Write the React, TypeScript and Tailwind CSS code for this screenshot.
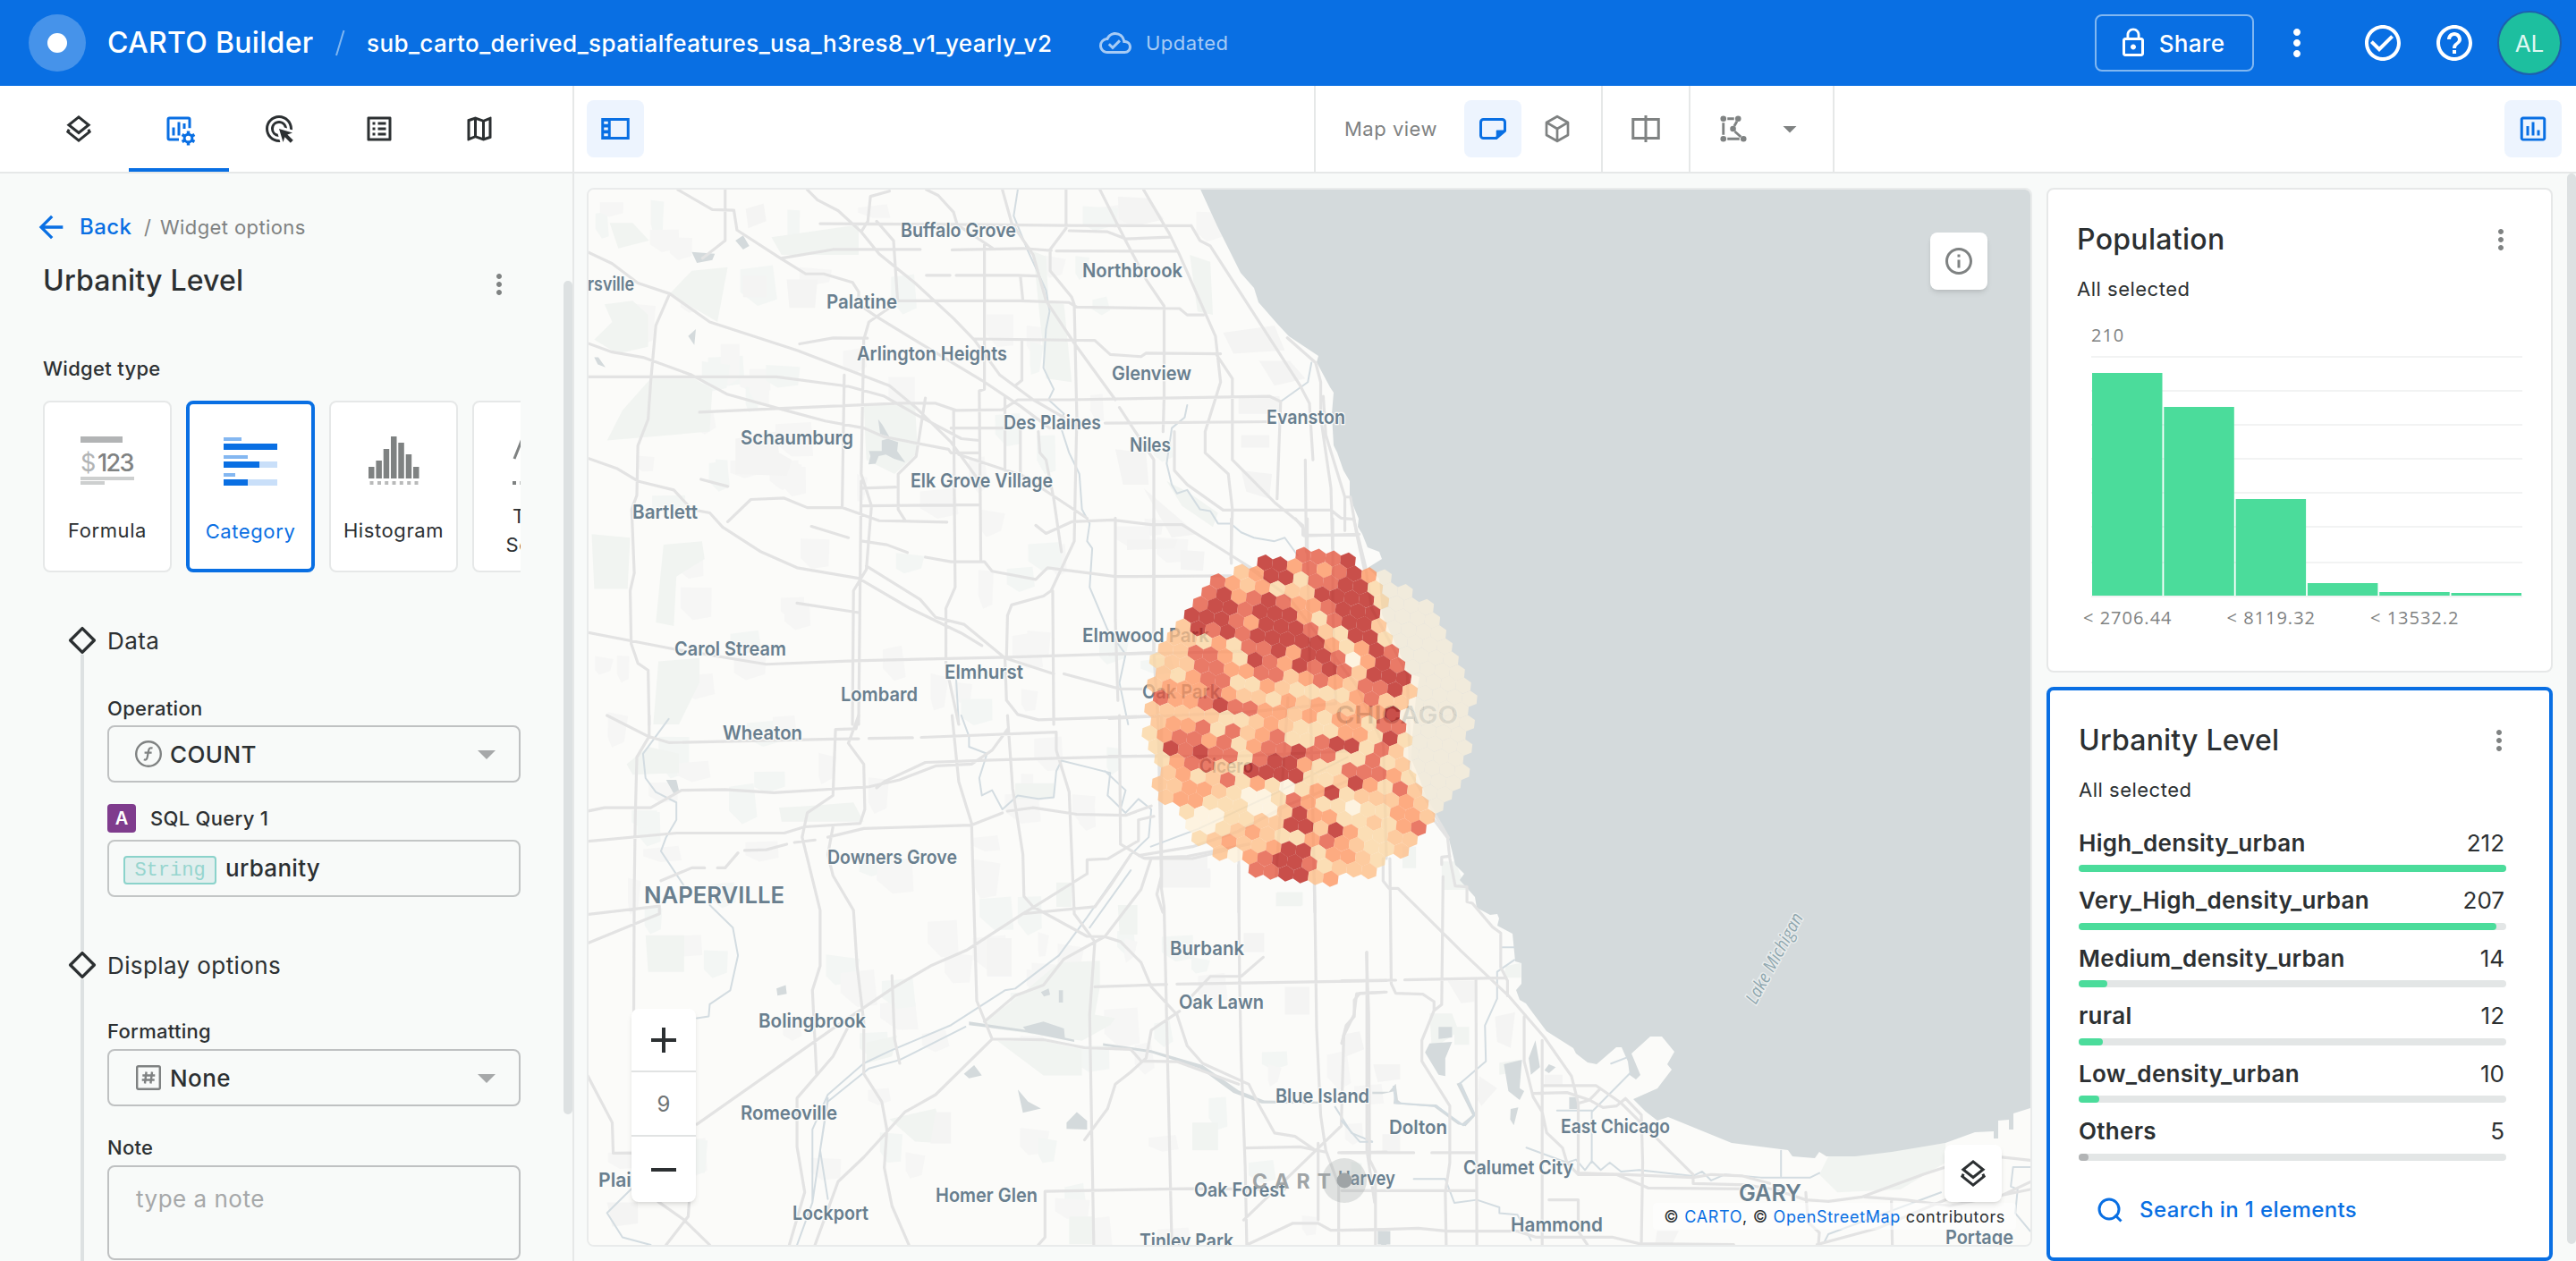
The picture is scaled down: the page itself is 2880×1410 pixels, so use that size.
import React from "react";
import {
  MdOutlineCloudDone,
  MdLockOutline,
  MdMoreVert,
  MdCheckCircleOutline,
  MdHelpOutline,
  MdAdsClick,
  MdListAlt,
  MdOutlineMap,
  MdInsertChartOutlined,
  MdInfoOutline,
  MdAdd,
  MdRemove,
  MdArrowDropDown,
  MdArrowBack,
} from "react-icons/md";

/* ---------- Icons ---------- */

const LayersIcon = ({ className = "" }: { className?: string }) => (
  <svg viewBox="0 0 24 24" className={className} fill="none" stroke="currentColor" strokeWidth="2">
    <path d="M12 3.3 19.4 9.2 12 15 4.6 9.2Z" />
    <path d="M4.8 12.5 3.9 14.2 12 20.7 20.1 14.2 19.2 12.5" />
  </svg>
);

const WidgetsIcon = () => (
  <svg viewBox="0 0 24 24" className="h-9 w-9 overflow-visible" fill="currentColor">
    <path d="M5 3h14a2 2 0 0 1 2 2v6.500h-2V5H5v14h7v2H5a2 2 0 0 1-2-2V5a2 2 0 0 1 2-2Z" />
    <path d="M7 11h2v6H7zM11 7h2v10h-2zM15 8h2v4h-2z" />
    <circle cx="19" cy="19" r="2.900" fill="none" stroke="currentColor" strokeWidth="2" />
    <path
      d="M19 13.700v2.300M19 22v2.300M14.400 16.300l2 1.200M21.600 20.500l2 1.200M14.400 21.700l2-1.200M21.600 17.500l2-1.200"
      fill="none"
      stroke="currentColor"
      strokeWidth="2.300"
    />
  </svg>
);

const PanelIcon = () => (
  <svg viewBox="0 0 24 24" className="h-9 w-9" fill="currentColor" fillRule="evenodd">
    <path d="M1.500 4h21v16h-21zM8.500 6h12v12h-12zM3.500 6.500h3v2h-3zM3.500 11h3v2h-3zM3.500 15.500h3v2h-3z" />
  </svg>
);

const FlatMapIcon = () => (
  <svg viewBox="0 0 24 24" className="h-9 w-9" fill="none" stroke="currentColor" strokeWidth="2" strokeLinejoin="round">
    <path d="M14.5 19H5a2 2 0 0 1-2-2V7a2 2 0 0 1 2-2h14a2 2 0 0 1 2 2v6.5Z" />
    <path d="M15 19v-5.5h6Z" fill="currentColor" strokeWidth="1" />
  </svg>
);

const CubeIcon = () => (
  <svg viewBox="0 0 24 24" className="h-9 w-9" fill="none" stroke="currentColor" strokeWidth="1.8" strokeLinejoin="round">
    <path d="M12 2.8 20 7.3v9.4l-8 4.5-8-4.5V7.3ZM4 7.3l8 4.7 8-4.7M12 12v9.2" />
  </svg>
);

const SplitIcon = () => (
  <svg viewBox="0 0 24 24" className="h-9 w-9" fill="none" stroke="currentColor" strokeWidth="2">
    <path d="M2.500 5h19v14h-19ZM12 2v20" />
  </svg>
);

const PolygonIcon = () => (
  <svg viewBox="0 0 24 24" className="h-9 w-9" fill="currentColor">
    <path d="M7.500 4.500h5M7.500 19.500h9M4.500 7.500v9M14.600 6.500l-2 3.500M13 14l4.500 4" fill="none" stroke="currentColor" strokeWidth="1.900" />
    <circle cx="4.500" cy="4.500" r="2.200" />
    <circle cx="15.500" cy="4.500" r="2.200" />
    <circle cx="11.700" cy="12" r="2.200" />
    <circle cx="4.500" cy="19.500" r="2.200" />
    <circle cx="19.500" cy="19.500" r="2.200" />
  </svg>
);

const FunctionIcon = () => (
  <svg viewBox="0 0 32 32" className="h-8 w-8" fill="none" stroke="currentColor" strokeWidth="2.4">
    <circle cx="16" cy="16" r="13.8" />
    <path d="M20.5 9.6c-2.6-1-4 .3-4.5 3.2l-1.2 6.6c-.5 2.8-1.800 3.700-4 2.800M11.600 14.600h8" strokeWidth="2.200" />
  </svg>
);

const HashIcon = () => (
  <svg viewBox="0 0 32 32" className="h-8 w-8" fill="none" stroke="currentColor">
    <rect x="3.2" y="3.2" width="25.6" height="25.6" rx="1.5" strokeWidth="2.4" />
    <path d="M13.6 9.5l-1.6 13M20 9.5l-1.6 13M9.3 13.5h14M8.7 18.5h14" strokeWidth="2.4" />
  </svg>
);

const SearchIcon = () => (
  <svg viewBox="0 0 36 36" className="h-9 w-9" fill="none" stroke="currentColor" strokeWidth="3">
    <circle cx="17" cy="17" r="11" />
    <path d="M23.5 23.5 30.5 30.5" />
  </svg>
);

const Diamond = () => (
  <svg viewBox="0 0 32 32" className="h-8 w-8 shrink-0" fill="none" stroke="#2c3032" strokeWidth="3.4" strokeLinejoin="round">
    <path d="M16 2.6 29.4 16 16 29.4 2.6 16Z" />
  </svg>
);

/* ---------- Map ---------- */

const HEX_COLORS: Record<string, string> = {
  D: "#bb201a",
  R: "#e5563f",
  O: "#fe9560",
  P: "#febe87",
  Y: "#fbd6a2",
  W: "#fef1da",
  S: "#faf0dd",
};

// Each row: [row index, first column, class codes]
const HEX_ROWS: [number, number, string][] = [
  [-1, -2, "RRRD"],
  [0, -4, "DDORORDOS"],
  [1, -6, "PODDYRRDDYSS"],
  [2, -7, "ROPOYPPDDDDYSSS"],
  [3, -8, "RDORDROORDDDSSSS"],
  [4, -8, "RDDRDDDOYRDDPSSSS"],
  [5, -9, "DDDRODDDRPYDDYSSSS"],
  [6, -9, "PDRDRDDDDDOYODRSSSS"],
  [7, -10, "PPYOYRRDODDRWODRSSSS"],
  [8, -10, "PPRROYDRODRDRPDDDSSSS"],
  [9, -11, "YPPRROORRPOROPRRDPSSSS"],
  [10, -10, "PYORRYYOPYYYYORPPSSSS"],
  [11, -11, "POOOROPPYOPOPPOODSSSSS"],
  [12, -10, "ROORDRROOPOYOOYRRSSSS"],
  [13, -11, "PPPPPYYPOPYYYOOYDYSSSS"],
  [14, -10, "POORYRPORYYRDDYRPSSSS"],
  [15, -11, "YORRORYORRDRRYYRYPSSSS"],
  [16, -10, "YDRDRRYRDDOYYRRROYSSS"],
  [17, -10, "YORRPYDDDDYYPDOYRPSS"],
  [18, -9, "POYPRYOYWYODYPPPOPS"],
  [19, -10, "PPOOPYWWYROYYWYYOOP"],
  [20, -9, "POOYYYWWPDOOYYPYOR"],
  [21, -8, "YWWYYPPDDPDOYYPP"],
  [22, -7, "WWYPOPYYOROPYYP"],
  [23, -7, "YPOPPODDYOOPY"],
  [24, -5, "PWORDDRYPPP"],
  [25, -3, "RRDDPO"],
];

const HEX_VERTICES = [
  [7.9, 5.6],
  [-0.93, 9.15],
  [-8.85, 3.55],
  [-7.9, -5.6],
  [0.93, -9.15],
  [8.85, -3.55],
];

function hexCells() {
  const cells: { points: string; color: string; key: string }[] = [];
  for (const [row, start, codes] of HEX_ROWS) {
    const odd = Math.abs(row) % 2;
    codes.split("").forEach((code, j) => {
      const col = start + j + odd * 0.5;
      const cx = 1240 + (722 - 4.15 * row + 49.9 * col) / 3;
      const cy = 580 + (172 + 40.83 * row + 6.15 * col) / 3;
      cells.push({
        key: row + ":" + j,
        color: HEX_COLORS[code],
        points: HEX_VERTICES.map(([x, y]) => (cx + x).toFixed(2) + "," + (cy + y).toFixed(2)).join(" "),
      });
    });
  }
  return cells;
}

// Faint built-up blocks scattered over the suburbs
function blocks() {
  let seed = 11;
  const rnd = () => {
    seed = (seed * 16807) % 2147483647;
    return seed / 2147483647;
  };
  const out: { d: string; park: boolean }[] = [];
  for (let i = 0; i < 190; i++) {
    const x = 665 + rnd() * 860;
    const y = 215 + rnd() * 1160;
    const w = 12 + rnd() * 28;
    const h = 12 + rnd() * 28;
    const s = (rnd() - 0.5) * 10;
    if (x > 1300 && y > 280 && y < 1030) continue;
    out.push({
      park: rnd() > 0.68,
      d: `M${x.toFixed(1)} ${y.toFixed(1)}l${w.toFixed(1)} ${s.toFixed(1)}l${(-s).toFixed(1)} ${h.toFixed(1)}l${(-w * 0.6).toFixed(1)} ${(rnd() * 8).toFixed(1)}l${(-w * 0.4 + s).toFixed(1)} ${(-h * 0.4).toFixed(1)}Z`,
    });
  }
  return out;
}

type Sheet = {
  transform: string;
  roads: string;
  rivers: string;
  lakes: string;
  parks: string;
  urban: string;
};

const SHEETS: Sheet[] = [
  {
    transform: "translate(650 190) scale(0.574 0.3954)",
    roads:
      "M188 56 255 112 297 114 303 170 388 250 437 294 472 294 528 318 540 345 540 380 575 415 665 495 780 595 855 668 912 730M280 56V200L236 250M440 56 460 85 500 115 545 175 580 238 650 320 725 420 765 480 815 580 880 650 940 700M388 250 490 225 660 225M722 226 860 222 915 228M925 229 1160 230M465 152 730 154 940 157 1188 158M600 60 563 75 558 145 545 175M575 145 608 200 616 370 855 370 950 375 965 388 1165 392 1180 410 1212 410M672 56 695 72 725 120 732 155 800 220M785 210V620L775 625 778 1105M820 56 838 150 880 240 905 370 960 490 1040 650M1048 672 1115 820V1365M944 56V165L913 225V285L955 360 960 380 965 700 962 900 960 1050 915 1190M1010 56 1060 200 1100 310 1135 385V640L1133 740M1095 56 1145 180 1165 240 1235 470 1245 600 1215 740V800L1260 860 1268 960 1265 1100M1188 158 1205 200 1225 215 1400 610 1418 660 1425 820M950 172 1025 175 1060 195 1145 190M855 300 860 370M730 298H850L888 300M12 232 60 265 110 320 172 350 250 430 420 510 600 610 650 670 720 770 770 870M172 350 145 440 135 600 130 705 110 780 108 920 98 960 103 1140 95 1190 97 1340 110 1395 130 1415 132 1568M12 490 60 515 120 530 215 580 285 635 385 675 475 710 550 730 590 755 715 790 720 800 775 800M12 585H380L520 612 590 640 650 690 740 760 775 765M230 685 380 675 620 660 690 660 730 680 820 678 850 650 950 650 1340 640 1362 655 1355 930M725 680 728 1180 710 1240V1400L735 1568M425 492 490 475 557 476M600 390 560 430 550 480 545 860 565 950 555 1130 530 1190 528 1568M545 880 540 1568M512 580 508 950M670 645 652 810 617 860V960L630 990M548 900 612 897M548 950 775 947M12 815 70 845 110 880 180 905 215 960 250 970 275 1010 350 1080 420 1125 540 1155 640 1240 740 1310 780 1345M285 995 330 932 395 928 440 955 508 955 580 992 712 996M555 1120 660 1215 690 1265 745 1285 825 1380 920 1425M940 1425 1050 1468 1100 1468M548 1050 595 1060 635 1082M670 1095 720 1108 785 1108 800 1135 885 1158 908 1125 1040 1150 1265 1148M885 1005 905 1028 955 995 1035 990 1110 1003 1170 1003 1260 1085 1320 1140M765 478 1000 482 1030 522 1090 528 1100 518 1245 520M858 485V595L845 610M825 640V850M855 730V860M720 730H820M1020 716 1350 712M735 805 860 865 985 985M890 740 893 800 905 820 920 930 935 1080M918 1190 920 1568M1040 985V1270L1045 1500M12 1308 180 1355 360 1398 530 1388 830 1378 1115 1365M825 1378 828 1500 850 1540 890 1555 1100 1545M915 1190 900 1205 838 1230 830 1260 828 1380M1155 740V850L1180 890 1250 962 1460 962 1480 985 1505 988M1268 590V820L1350 940 1405 1005 1408 1035 1515 1030M1236 520 1268 590M1375 475 1430 545 1440 600V700L1460 900 1463 1070M1445 640 1450 750 1487 925V1020M1490 925H1498L1510 1030 1525 1130M1410 820 1412 1080M420 1225 540 1252M448 1008 520 1040M233 875 285 895M672 298H718",
    rivers:
      "M850 56 842 130 870 230 905 340 912 400 905 450 900 560 920 620 910 650 940 690 930 710 950 800 970 860 975 960 990 1000 985 1050 995 1070 990 1180 1025 1300 1060 1370 1048 1450 1065 1568M1180 665 1175 700 1150 730 1140 830 1150 890 1160 915 1180 905 1205 960 1225 965 1240 1000 1265 1000 1285 1025 1310 1040 1350 1050 1370 1040 1395 1090M1422 545 1415 600 1362 655M730 1440 735 1568",
    lakes:
      "M215 232l45 5-5 18-30 8zM300 200l15-15 12 30-12 10zM208 470l15-20-3 45zM578 705l8 15 14 35-18-8zM560 795l25 0 0-30 12-5 20 10-2 25 16 32-22-10-16-12-14 4-6 22-14 2 4-24zM25 530l8 0 14 28-15-8z",
    parks:
      "M55 150h45l32 50-60 22zM25 480 60 430 45 380 100 370 130 410V500L70 520ZM135 590H220L255 620 250 740 50 765 80 680ZM172 350 215 285 285 275 265 430ZM370 190 540 155V240H390ZM550 665H650L655 800 610 860 555 820ZM880 230 905 245 910 370 940 380 955 600 905 590ZM1185 240 1225 260 1230 410 1200 400ZM20 1030 95 1040 90 1185 25 1185ZM160 1060 235 1050 240 1100 185 1150 180 1290 145 1280ZM150 1390 230 1380V1450L190 1568H140ZM1140 880l40 30 60 60-10 40-60-60z",
    urban:
      "M320 110 355 95 360 145 325 165ZM315 300h45v60h-45zM400 310h60l-5 80h-50zM300 760 380 740 385 800 410 820 400 865 300 860ZM1045 75l60 5 30 60-60 20-28-20zM1250 460 1350 440 1370 510 1270 520ZM1040 790l60 10 5 90h-50zM1320 540h60l30 50-60 20zM1280 640h80v50h-80zM1285 750h55v35h-55zM1285 850l60 10-5 70-45-20zM1095 900 1200 1030 1150 1040Z",
  },
  {
    transform: "translate(650 800) scale(0.574 0.389)",
    roads:
      "M50 0 130 60 170 78 490 68 540 67M560 66 645 64M662 63 925 48M132 0V60L108 120 105 290 103 500 102 850M540 0 520 80 550 140 552 270 543 310 435 320 395 338 185 338 12 362M540 0 535 38 495 40 490 230 440 280 430 350 465 560V720L450 790 458 1030M12 275 45 265 135 265 195 215 280 213 375 222 560 205 620 185 690 145 760 140 800 100 830 40M575 208 590 190 670 135 800 128 1130 115M722 0 735 190 760 310 770 820 800 930M830 0 840 210 860 400 862 520 880 550 985 635 1020 636 1050 650 1090 710 1110 780 1160 860 1180 950 1210 1000 1300 1060 1320 1120 1350 1200 1390 1210 1430 1250M490 320 480 400 490 460 530 560 537 720 550 880V1030L585 1110 595 1190 590 1300 605 1410 638 1522M480 350 550 325 760 315 820 280M830 275 880 265 965 284 1060 287 1110 260M455 358 415 365M400 370 360 386 318 388M305 395 280 438H265M240 438H215L155 475M152 548V570L12 655M12 572 152 548M1130 0V500L1135 550 1145 1200 1150 1522M1048 0 1050 370 1095 410 1180 405 1300 370M925 50V100L950 220 960 570 1000 650 990 860 998 1522M985 455V415L1025 412 1085 360V300L1115 290M985 455 860 570 750 675 680 720 605 785 490 900 225 1175M860 570 1000 550 1030 490 1070 400M1110 410 1090 500 1020 635 940 700 900 775 845 805 785 880M1000 780 1140 773M1160 772 1568 762M1280 430 1282 760 1285 980 1293 1300 1296 1522M1428 480 1432 900 1440 1150 1450 1250 1475 1350V1522M1530 680V1250L1545 1400M1328 695 1285 750 1225 750 1190 805M1165 850 1110 905 1100 985 1070 1025 1040 1060 1025 1130 980 1220M800 930 900 932 980 955 1070 960 1090 993 1160 995 1280 1060M800 930 690 1090 630 1140 550 1270 500 1340 455 1522M518 900 490 980 420 1100V1240L435 1370 405 1522M605 748 610 930 620 1000M12 1035 60 1170 62 1258 100 1258M150 1398 200 1450 250 1522M210 1398 208 1440 165 1522M890 1522 903 1500V1368L1180 1360 1370 1362M1568 795 1510 800 1505 860 1485 920 1480 1180 1290 1450M1293 1243 1400 1240 1450 1255M1475 1257 1568 1255M1296 1522 1385 1460 1435 1460 1460 1480 1568 1478M1435 1230V1450",
    rivers:
      "M740 0 755 60 755 90 790 110 775 180 780 230 800 215 820 270 850 230 890 240 920 235 925 160 935 130 990 150 1030 165 1025 230 1060 280 1085 240 1110 270 1105 350 1070 400 985 580 930 690 845 785 825 790 720 890 600 965 550 1000 480 1090 450 1190V1400L420 1522M1070 445 990 610M170 10 120 110 125 180 145 220 185 250 185 300 165 350 155 390 200 490M250 545 295 610 305 690 290 790 250 830 248 865 225 870M98 1360 50 1430 80 1500 135 1522M748 895 620 990 560 1015 480 1110 465 1250 480 1390M480 1100 450 1400M1020 160 1060 215 1050 270M1468 1125 1500 1200 1540 1225",
    lakes:
      "M860 895 900 880 940 900 942 930 870 912ZM755 880 870 905 960 932V938L870 911 755 890ZM1016 942 1110 962 1210 1005 1280 1078 1330 1107 1440 1110 1440 1116 1325 1115 1270 1085 1205 1015 1110 970 1016 949ZM945 1170 965 1140 985 1165V1190L945 1188ZM850 1075 870 1110 895 1130 860 1142ZM380 785l18-10 2 25-18 5zM1552 1485h16v37h-10zM165 185l20 0 5 30-10 10zM745 1030l20-25 15 30-25 8zM895 795l15-10 3 18-12 5zM930 790h8v35h-8z",
    parks:
      "M930 710 1010 705V780L1000 860 1040 870 1030 890 975 935 800 900 785 880 850 810ZM810 935H900L975 960V1035H900ZM385 265 440 260 530 250 550 305H390ZM125 632h75v105h-70zM88 140 130 90 190 110V165L100 170ZM845 195h75v45h-75zM950 1440h50v80h-50zM1190 1170h50v80h-50zM600 1160 690 1130 710 1230 650 1225ZM1045 545h38v85h-35zM925 480h30v70h-30zM555 940l60-20-10 60-50 20zM1355 508h50v38h-50z",
    urban:
      "M1130 440h95v55h-95zM1290 625h40v55h-40zM790 640h48v110h-48zM690 1140h30v90h-40zM1370 780h48v80h-48zM50 1400l60 0 0 60-50 10z",
  },
  {
    transform: "translate(1500 900) scale(0.5038 0.3333)",
    roads:
      "M107 180 110 600 120 632 180 635 205 660V690L178 790V860L240 1010V1200L230 1300 232 1475M92 180V255L105 280 125 280 265 490 370 640 450 780 510 910 525 1000V1240M225 240 222 670 205 690M205 50 235 110 240 180 252 272 278 275V325L290 330 335 410 353 430V545L368 590V640M240 172 222 175V200M0 590 120 588M140 587 365 580M55 495 60 700 62 1190 75 1230V1475M95 628 40 632 28 655V710L10 740 0 800M298 585 300 1475M405 710V860L425 980 445 1030 455 1100 490 1150 500 1200 525 1240M445 790V1475M448 942H565L620 1000 780 1240M425 968 500 965 550 990 580 1015 610 1010 630 985 665 1040 668 1200 665 1475M528 1000 550 990 572 955M525 1240H610L680 1285 895 1288M525 1235 630 1240 780 1250 820 1240 890 1245 950 1270M780 1255V1270L900 1275 960 1290 1030 1325 1080 1330 1155 1315 1290 1240 1340 1215M1030 1300 1035 1400 1060 1435 1058 1475M1055 1475 1190 1420 1380 1300M1160 1315 1250 1325 1350 1345 1528 1290M1465 1182 1528 1192M1465 1310 1528 1265M0 1167H160M200 1167H295M0 1294H298M0 1427 80 1425 170 1420 235 1430 390 1430 430 1450 600 1450 660 1472 870 1475M460 1325H525V1430L545 1475M1220 1330 1222 1475",
    rivers:
      "M115 945 120 1000 210 1010 270 1075 295 1040 262 935 320 860 318 740 345 650V560L383 520M353 478H383M555 1200V1030L640 900M478 1025H555M410 1150 500 1200 520 1190 540 1225 555 1195 575 1225 595 1200 620 1230 660 1225 780 1245 800 1230 820 1260 850 1240 930 1250 1040 1250 1060 1235M160 1255 230 1255 250 1335 300 1325 350 1350 350 1370 390 1375 420 1460M975 1160V1245M0 1060 40 1130 68 1130M598 868 632 848M1528 1215H1490L1485 1280 1500 1290 1495 1370 1528 1430M1070 1470 1080 1440 1330 1300",
    lakes:
      "M360 870 400 855 395 950 405 960 395 990 370 960ZM415 850 430 790 440 880 420 905ZM195 800 245 795 230 850V910L215 905 185 830ZM215 745h30v35l-30 5zM450 890 460 870 475 880 460 900ZM505 980h18v40h-18zM80 1430h28v45h-28zM68 962 105 962 120 935 125 990 135 1003 210 1005 265 1072 290 1040 255 935 265 930 298 1040 275 1078 258 1072 205 1013 115 1003 118 960 90 970H68ZM375 1020l17-5-10 60-8-20z",
    parks:
      "M1080 1180 1340 1135V1200L1240 1290 1100 1300 1060 1240ZM195 700h50l15 60-60 60zM222 190h30l25 95h-55zM365 540l33-10v50h-40zM135 140h30v72h-30zM250 745h33v60h-33zM350 865l45-10v40l-45 10z",
    urban:
      "M340 710l45-15-10 120-30-20zM0 770l40-10 10 60-50 30zM70 870h60v50l-50 10zM90 1105h40v60h-40zM235 590h60v70l-30 5zM305 910l40 40-35 60-8-20zM450 905h40v40h-40zM700 1430h48l-15 45h-38z",
  },
  {
    transform: "translate(1240 580) scale(0.33333)",
    roads:
      "M150 0V450L165 700 175 1200 160 1260 180 1320M0 455 450 445M410 0V150M450 150 600 260 830 560 920 760 930 1140M665 0V90L690 1320M750 0V300L760 620M650 55H835M625 0 650 30V55M820 0 860 160 880 300 1000 520 1010 850 1138 1070M0 670 450 650 760 620M0 797 420 797 800 780M100 1130 280 1100 430 1050 600 960 800 880M120 1140H280L400 1110M435 1100V1320M560 1200 600 600",
    rivers: "M140 1100 300 1040 560 920 800 800",
    lakes: "",
    parks: "M985 1100h42v70h-42zM1120 1150l40 40 40 50-80 5zM560 1255h85v45h-85z",
    urban: "M180 1130h150v45H180zM220 1180h120v40H220zM240 105l80 5-5 65-75-5zM60 70h170l-10 30-160 5z",
  },
];

const SEA =
  "M1339 205 1361 253 1387 305 1402 322 1407 338 1428 362 1441 376 1474 398 1472 405 1487 433 1491 439 1489 463 1491 498 1495 506 1502 526 1509 538 1509 556 1519 580 1518 589 1523 597 1529 612 1542 617 1545 625 1529 635 1542 647 1545 687 1557 713 1575 753 1587 757 1583 780 1580 813 1577 847 1588 873 1597 900 1605 915 1619 935 1623 950 1627 967 1637 977 1632 984 1649 1003 1651 1015 1666 1023 1674 1022 1676 1027 1674 1035 1691 1044 1694 1075 1701 1077V1100L1695 1107 1699 1118 1706 1122 1714 1133 1729 1153 1759 1172 1762 1178 1775 1188 1785 1190 1807 1171 1813 1171 1820 1187 1822 1202 1829 1207 1834 1202 1824 1178 1845 1159H1858L1872 1176 1864 1190 1869 1196 1853 1217 1826 1229 1840 1243 1853 1253 1865 1249 1936 1278 1999 1286 2004 1293 2029 1295 2034 1288 2042 1293H2074L2115 1288 2175 1278 2208 1266 2229 1265V1273H2234V1253L2246 1252V1263H2251V1245L2280 1236V200Z";

// name, left, baseline, width, size
const LABELS: [string, number, number, number, number][] = [
  ["Buffalo Grove", 1007, 265, 129, 22],
  ["Northbrook", 1210, 310, 112, 22],
  ["rsville", 657, 325, 52, 22],
  ["Palatine", 924, 345, 79, 22],
  ["Arlington Heights", 958, 403, 168, 22],
  ["Glenview", 1243, 425, 89, 22],
  ["Des Plaines", 1122, 480, 109, 22],
  ["Niles", 1263, 505, 46, 22],
  ["Evanston", 1416, 474, 88, 22],
  ["Schaumburg", 828, 497, 126, 22],
  ["Elk Grove Village", 1018, 545, 159, 22],
  ["Bartlett", 707, 580, 73, 22],
  ["Carol Stream", 754, 733, 125, 22],
  ["Elmhurst", 1056, 759, 88, 22],
  ["Lombard", 940, 784, 86, 22],
  ["Elmwood Park", 1210, 718, 142, 22],
  ["Oak Park", 1277, 781, 87, 22],
  ["Cicero", 1341, 864, 60, 22],
  ["CHICAGO", 1493, 809, 137, 27],
  ["Wheaton", 808, 827, 89, 22],
  ["Downers Grove", 925, 966, 145, 22],
  ["NAPERVILLE", 720, 1010, 157, 26],
  ["Burbank", 1308, 1068, 83, 22],
  ["Oak Lawn", 1318, 1128, 95, 22],
  ["Bolingbrook", 848, 1149, 120, 22],
  ["Romeoville", 828, 1252, 108, 22],
  ["Blue Island", 1426, 1233, 105, 22],
  ["Plainfield", 669, 1327, 95, 22],
  ["Homer Glen", 1046, 1344, 114, 22],
  ["Oak Forest", 1335, 1338, 102, 22],
  ["Lockport", 886, 1364, 85, 22],
  ["Tinley Park", 1274, 1395, 105, 22],
  ["Harvey", 1496, 1325, 64, 22],
  ["Dolton", 1553, 1268, 65, 22],
  ["East Chicago", 1745, 1267, 122, 22],
  ["Calumet City", 1636, 1313, 123, 22],
  ["GARY", 1944, 1343, 70, 26],
  ["Hammond", 1689, 1377, 103, 22],
  ["Portage", 2175, 1391, 76, 22],
];

function MapCanvas() {
  return (
    <svg viewBox="658 212 1612 1180" className="h-[1180px] w-[1612px]">
      <rect x="658" y="212" width="1612" height="1180" fill="#fbfbf9" />
      {blocks().map((b) => (
        <path key={b.d} d={b.d} fill={b.park ? "#f3f6f4" : "#f6f6f5"} />
      ))}
      {SHEETS.map((s) => (
        <g key={s.transform} transform={s.transform}>
          <path d={s.parks} fill="#f1f4f1" />
          <path d={s.urban} fill="#f4f4f3" />
        </g>
      ))}
      <path d={SEA} fill="#d4dadc" />
      {SHEETS.map((s) => (
        <g key={s.transform} transform={s.transform} fill="none" strokeLinejoin="round" strokeLinecap="round">
          <path d={s.lakes} fill="#d4dadc" />
          <path d={s.rivers} stroke="#d3dce1" strokeWidth="2" vectorEffect="non-scaling-stroke" />
          <path d={s.roads} stroke="#e3e3e3" strokeWidth="3.2" vectorEffect="non-scaling-stroke" />
        </g>
      ))}
      <g
        fill="#697f8f"
        stroke="#fbfbf9"
        strokeWidth="2.5"
        strokeLinejoin="round"
        paintOrder="stroke"
        className="font-['Inter',sans-serif] font-semibold"
      >
        {LABELS.map(([name, x, y, w, size]) => (
          <text
            key={name}
            x={x}
            y={y}
            fontSize={size}
            textLength={w}
            lengthAdjust="spacingAndGlyphs"
            strokeOpacity={name === "CHICAGO" || name === "Cicero" ? 0.25 : 1}
          >
            {name}
          </text>
        ))}
      </g>
      <text
        transform="translate(1963 1124) rotate(-61.5)"
        fontSize="20"
        textLength="112"
        lengthAdjust="spacingAndGlyphs"
        fill="#8fa6ae"
        stroke="#e8ecec"
        strokeWidth="3"
        paintOrder="stroke"
        className="font-['Open_Sans',sans-serif] italic"
      >
        Lake Michigan
      </text>
      <g opacity="0.78">
        {hexCells().map((c) => (
          <polygon key={c.key} points={c.points} fill={c.color} />
        ))}
      </g>
      <text
        x="1400"
        y="1329"
        fontSize="23"
        textLength="88"
        fill="#9fa4a6"
        className="font-['Inter',sans-serif] font-bold"
      >
        CART
      </text>
      <circle cx="1503" cy="1320" r="25" fill="#9fa4a6" fillOpacity="0.3" />
      <circle cx="1503" cy="1320" r="8.5" fill="#9fa4a6" />
    </svg>
  );
}

function MapPanel() {
  return (
    <div className="relative h-[1184px] w-[1616px] shrink-0 overflow-hidden rounded-lg border-2 border-[#e9ebeb]">
      <MapCanvas />
      <button className="absolute top-12 right-12 flex h-16 w-16 items-center justify-center rounded-lg bg-white text-[#7f8282] shadow-md">
        <MdInfoOutline className="h-9 w-9" />
      </button>
      <div className="absolute right-4 bottom-[17px] flex h-[30px] items-center rounded bg-white/50 px-3 text-[18px] tracking-[0.65px] whitespace-nowrap text-[#2c3032]">
        ©&nbsp;<span className="text-[#096fe3]">CARTO</span>, ©&nbsp;<span className="text-[#096fe3]">OpenStreetMap</span>
        &nbsp;contributors
      </div>
      <button className="absolute right-8 bottom-12 flex h-16 w-16 items-center justify-center rounded-lg bg-white text-[#2c3032] shadow-md">
        <LayersIcon className="h-9 w-9" />
      </button>
      <div className="absolute bottom-12 left-12 flex w-[72px] flex-col divide-y-2 divide-[#e1e3e3] rounded-lg bg-white text-[#2c3032] shadow-md">
        <button className="flex h-[71px] items-center justify-center">
          <MdAdd className="h-12 w-12" />
        </button>
        <span className="flex h-[72px] items-center justify-center pt-0.5 text-2xl text-[#6f7475]">9</span>
        <button className="flex h-[73px] items-center justify-center">
          <MdRemove className="h-12 w-12" />
        </button>
      </div>
    </div>
  );
}

/* ---------- Header ---------- */

function Header() {
  return (
    <header className="flex h-24 shrink-0 items-center bg-[#096fe3] pr-4 pl-8 text-white">
      <div className="flex h-16 w-16 items-center justify-center rounded-full bg-white/25">
        <div className="h-[22px] w-[22px] rounded-full bg-white" />
      </div>
      <div className="ml-6 w-[254px] text-[32px] font-medium tracking-[0.3px] whitespace-nowrap">CARTO Builder</div>
      <svg viewBox="0 0 12 32" className="h-8 w-3" stroke="#81b7f1" strokeWidth="2">
        <path d="M10.5 2 2 30" />
      </svg>
      <div className="ml-6 w-[819px] text-[26px] font-medium tracking-[0.4px] whitespace-nowrap">
        sub_carto_derived_spatialfeatures_usa_h3res8_v1_yearly_v2
      </div>
      <div className="flex items-center gap-4 text-[22px] tracking-[0.5px] text-[#a6cbf5]">
        <MdOutlineCloudDone className="h-9 w-9" />
        <span>Updated</span>
      </div>
      <div className="ml-auto flex items-center">
        <button className="flex h-16 w-[178px] items-center justify-center gap-[11px] rounded-lg border-2 border-[#81b7f1] pr-2 text-[26px] font-medium tracking-[0.3px]">
          <MdLockOutline className="h-9 w-9" />
          Share
        </button>
        <MdMoreVert className="ml-6 h-12 w-12" />
        <MdCheckCircleOutline className="ml-12 h-12 w-12" />
        <MdHelpOutline className="ml-8 h-12 w-12" />
        <div className="ml-6 flex h-[72px] w-[72px] items-center justify-center rounded-full border-2 border-[#1d5fae] bg-[#1dbf9f] text-[26px] text-[#dff7f1]">
          AL
        </div>
      </div>
    </header>
  );
}

const toolButton = "flex h-16 w-16 items-center justify-center rounded-lg";

function Toolbar() {
  return (
    <div className="flex h-[98px] shrink-0 border-b-2 border-[#e6e8e8] bg-white text-[#7f8282]">
      <nav className="flex w-[642px] border-r-2 border-[#e6e8e8] pl-8 text-[#2c3032]">
        <div className="flex w-28 items-center justify-center">
          <LayersIcon className="h-9 w-9" />
        </div>
        <div className="flex w-28 items-center justify-center border-b-4 border-[#096fe3] pt-1 text-[#096fe3]">
          <WidgetsIcon />
        </div>
        <div className="flex w-28 items-center justify-center">
          <MdAdsClick className="h-9 w-9" />
        </div>
        <div className="flex w-28 items-center justify-center">
          <MdListAlt className="h-9 w-9" />
        </div>
        <div className="flex w-28 items-center justify-center">
          <MdOutlineMap className="h-9 w-9" />
        </div>
      </nav>
      <div className="flex flex-1 items-center pr-4 pl-[14px]">
        <div className={toolButton + " bg-[#edf4fe] text-[#096fe3]"}>
          <PanelIcon />
        </div>
        <div className="ml-[749px] flex h-full items-center">
          <div className="flex h-full w-[321px] items-center border-l-2 border-[#e6e8e8] pl-8">
            <span className="w-[134px] text-[22px] tracking-[0.5px] whitespace-nowrap">Map view</span>
            <div className={toolButton + " bg-[#edf4fe] text-[#096fe3]"}>
              <FlatMapIcon />
            </div>
            <div className={toolButton + " ml-2"}>
              <CubeIcon />
            </div>
          </div>
          <div className="flex h-full w-[98px] items-center justify-center border-l-2 border-[#e6e8e8]">
            <SplitIcon />
          </div>
          <div className="flex h-full w-[163px] items-center border-x-2 border-[#e6e8e8] pl-[30px]">
            <PolygonIcon />
            <MdArrowDropDown className="ml-[27px] h-9 w-9" />
          </div>
        </div>
        <div className={toolButton + " ml-auto bg-[#edf4fe] text-[#096fe3]"}>
          <MdInsertChartOutlined className="h-9 w-9" />
        </div>
      </div>
    </div>
  );
}

/* ---------- Left panel ---------- */

function FormulaArt() {
  return (
    <svg viewBox="0 0 60 60" className="h-[60px] w-[60px]">
      <rect x="0" y="3" width="47" height="7" fill="#b2b4b5" />
      <text x="0" y="41.5" fontSize="27" fill="#b2b4b5" className="font-['Inter',sans-serif]">$</text>
      <text x="19" y="41.5" fontSize="27" textLength="42" fill="#7f8282" className="font-['Inter',sans-serif] font-medium">123</text>
      <rect x="0" y="48" width="60" height="4" fill="#cdcfcf" />
      <rect x="0" y="53" width="27" height="4" fill="#cdcfcf" />
    </svg>
  );
}

function CategoryArt() {
  return (
    <svg viewBox="0 0 60 60" className="h-[60px] w-[60px]" fill="#096fe3">
      <g fillOpacity="0.5">
        <path d="M0 3h20v4H0zM0 23h27v4H0zM0 43h13v4H0z" />
      </g>
      <g fillOpacity="0.22">
        <path d="M0 30h60v7H0zM0 50h60v7H0z" />
      </g>
      <path d="M0 10h60v7H0zM0 30h40v7H0zM0 50h27v7H0z" />
    </svg>
  );
}

function HistogramArt() {
  return (
    <svg viewBox="0 0 60 60" className="h-[60px] w-[60px]" fill="#7f8282">
      <path d="M2 37h6.5v13H2zM10.400 30h6.500v20h-6.500zM18.700 17h6.500v33h-6.500zM27 3h6.500v47H27zM35.300 10h6.500v40h-6.500zM43.700 23h6.500v27h-6.500zM52 37h6.500v13H52z" />
      <path d="M3.500 53h4v4h-4zM12 53h4v4h-4zM20.200 53h4v4h-4zM28.500 53h4v4h-4zM36.800 53h4v4h-4zM45.200 53h4v4h-4zM53.500 53h4v4h-4z" fillOpacity="0.55" />
    </svg>
  );
}

function TimeSeriesArt() {
  return (
    <svg viewBox="0 0 60 60" className="h-[60px] w-[60px]" fill="none" stroke="#7f8282" strokeWidth="3">
      <path d="M5 28 13 8 25 32 38 14 56 30" />
      <path d="M3 55h54" strokeWidth="4" strokeDasharray="4 4.500" />
    </svg>
  );
}

function TypeCard({ art, label, active }: { art: React.ReactNode; label: string; active?: boolean }) {
  return (
    <div
      className={
        "flex h-48 w-36 shrink-0 flex-col items-center rounded-lg bg-white text-center text-[22px] leading-8 tracking-[0.6px] " +
        (active ? "border-4 border-[#096fe3] pt-[34px] text-[#096fe3]" : "border-2 border-[#e6e8e8] pt-[35px] text-[#2c3032]")
      }
    >
      {art}
      <div className={"flex w-20 flex-1 items-center justify-center " + (active ? "pt-1.5" : "pt-0.5")}>
        <span>{label}</span>
      </div>
    </div>
  );
}

function SelectBox({ icon, value }: { icon: React.ReactNode; value: string }) {
  return (
    <div className="flex h-16 w-[462px] items-center rounded-lg border-2 border-[#bfc1c2] pr-3 pl-7 text-[#7f8282]">
      {icon}
      <span className="ml-2 flex-1 text-[26px] font-[450] tracking-[0.4px] text-[#2c3032]">{value}</span>
      <MdArrowDropDown className="h-12 w-12 text-[#a6a8a9]" />
    </div>
  );
}

const fieldLabel = "flex h-6 items-center text-[22px] font-[450] tracking-[0.3px] text-[#2c3032]";

function LeftPanel() {
  return (
    <aside className="flex w-[642px] shrink-0 border-r-2 border-[#e6e8e8]">
      <div className="w-[630px] pt-10">
        <div className="flex h-10 items-center pl-[37px] text-[22px] tracking-[0.4px] text-[#7f8282]">
          <MdArrowBack className="h-10 w-10 text-[#096fe3]" />
          <span className="ml-3 w-[72px] text-2xl font-medium text-[#096fe3]">Back</span>
          <span className="w-[18px]">/</span>
          <span>Widget options</span>
        </div>
        <div className="mt-5 flex h-10 items-center justify-between pr-[54px] pl-12">
          <h1 className="text-[32px] font-medium tracking-[0.2px] text-[#2c3032]">Urbanity Level</h1>
          <MdMoreVert className="mt-2 h-9 w-9 text-[#7f8282]" />
        </div>
        <div className="mt-[66px] pl-12">
          <div className={fieldLabel}>Widget type</div>
        </div>
        <div className="mt-6 ml-12 flex w-[534px] gap-4 overflow-hidden">
          <TypeCard art={<FormulaArt />} label="Formula" />
          <TypeCard art={<CategoryArt />} label="Category" active />
          <TypeCard art={<HistogramArt />} label="Histogram" />
          <TypeCard art={<TimeSeriesArt />} label="Time Series" />
        </div>
        <section className="mt-[60px] flex h-[363px] gap-3 pl-[76px]">
          <div className="flex w-8 flex-col items-center">
            <Diamond />
            <div className="w-1 flex-1 bg-[#dde1e2]" />
          </div>
          <div>
            <h2 className="flex h-8 items-center text-[26px] tracking-[0.4px] text-[#2c3032]">Data</h2>
            <div className={fieldLabel + " mt-12 mb-[7px]"}>Operation</div>
            <SelectBox icon={<FunctionIcon />} value="COUNT" />
            <div className="mt-6 mb-2 flex h-8 items-center gap-4">
              <span className="flex h-8 w-8 items-center justify-center rounded bg-[#7f3c8d] text-xl font-semibold text-white">A</span>
              <span className="text-[22px] font-[450] tracking-[0.3px] text-[#2c3032]">SQL Query 1</span>
            </div>
            <div className="flex h-16 w-[462px] items-center rounded-lg border-2 border-[#c3c6c6] pl-4">
              <span className="mt-1 flex h-8 w-[104px] items-center justify-center rounded border-2 border-[#8bd3cb] bg-[#e2efee] font-['Liberation_Mono',monospace] text-[22px] text-[#96d5ce]">
                String
              </span>
              <span className="mb-0.5 ml-[10px] text-[26px] font-[450] tracking-[0.3px] text-[#2c3032]">urbanity</span>
            </div>
          </div>
        </section>
        <section className="flex h-[347px] gap-3 overflow-hidden pl-[76px]">
          <div className="flex w-8 flex-col items-center">
            <Diamond />
            <div className="w-1 flex-1 bg-[#dde1e2]" />
          </div>
          <div>
            <h2 className="flex h-8 items-center text-[26px] tracking-[0.4px] text-[#2c3032]">Display options</h2>
            <div className={fieldLabel + " mt-[46px] mb-2"}>Formatting</div>
            <SelectBox icon={<HashIcon />} value="None" />
            <div className={fieldLabel + " mt-[34px] mb-2"}>Note</div>
            <div className="h-[106px] w-[462px] rounded-lg border-2 border-[#bfc1c2] px-[30px] pt-[16px] text-[26px] tracking-[0.5px] text-[#a6a8a9]">
              type a note
            </div>
          </div>
        </section>
      </div>
      <div className="w-[10px] pt-[120px]">
        <div className="h-[932px] rounded-full bg-[#dde1e2]" />
      </div>
    </aside>
  );
}

/* ---------- Right panel ---------- */

const BARS = [
  { height: 249, label: "< 2706.44" },
  { height: 211, label: "" },
  { height: 108, label: "< 8119.32" },
  { height: 14, label: "" },
  { height: 4, label: "< 13532.2" },
  { height: 3, label: "" },
];

const GRID = [399, 437, 475, 513, 551, 589, 629, 667];

function PopulationCard() {
  return (
    <div className="h-[542px] rounded-lg border-2 border-[#e6e8e8] bg-white px-8 pt-9">
      <div className="flex h-10 items-center justify-between pr-[6px]">
        <h3 className="text-[32px] font-medium tracking-[0.3px] text-[#2c3032]">Population</h3>
        <MdMoreVert className="h-9 w-9 text-[#7f8282]" />
      </div>
      <div className="mt-[21px] flex h-7 items-center text-[22px] tracking-[0.5px] text-[#2c3032]">All selected</div>
      <div className="mt-[23px] pl-4 font-['Open_Sans',sans-serif] text-[20px] leading-[30px] tracking-[1px] text-[#7f8282]">
        210
      </div>
      <svg viewBox="2338 395 482 274" className="mt-[5px] ml-4 h-[274px] w-[482px]">
        {GRID.map((y) => (
          <rect key={y} x="2338" y={y - 1} width="482" height="2" fill="#f2f3f3" />
        ))}
        {BARS.map((b, i) => (
          <rect key={i} x={2339 + i * 80.3} y={666 - b.height} width="78.500" height={b.height} fill="#4bdc9b" />
        ))}
      </svg>
      <div className="flex pl-[7px] font-['Open_Sans',sans-serif] text-[20px] leading-[34px] tracking-[1px] text-[#7f8282]">
        {BARS.filter((b) => b.label).map((b) => (
          <span key={b.label} className="mt-[5px] w-[160.500px] whitespace-nowrap">
            {b.label}
          </span>
        ))}
      </div>
    </div>
  );
}

const CATEGORIES = [
  { name: "High_density_urban", value: 212 },
  { name: "Very_High_density_urban", value: 207 },
  { name: "Medium_density_urban", value: 14 },
  { name: "rural", value: 12 },
  { name: "Low_density_urban", value: 10 },
  { name: "Others", value: 5, muted: true },
];

function UrbanityCard() {
  return (
    <div className="mt-4 h-[642px] rounded-lg border-4 border-[#096fe3] bg-white px-8 pt-9">
      <div className="flex h-10 items-center justify-between pr-[6px]">
        <h3 className="text-[32px] font-medium tracking-[0.2px] text-[#2c3032]">Urbanity Level</h3>
        <MdMoreVert className="h-9 w-9 text-[#7f8282]" />
      </div>
      <div className="mt-[21px] flex h-7 items-center text-[22px] tracking-[0.5px] text-[#2c3032]">All selected</div>
      <ul className="mt-[25px] w-[478px]">
        {CATEGORIES.map((c) => (
          <li key={c.name} className="h-[64.500px]">
            <div className="flex h-10 items-center justify-between text-[26px] text-[#2c3032]">
              <span className="font-semibold tracking-[0.3px]">{c.name}</span>
              <span className="pr-[2px]">{c.value}</span>
            </div>
            <div className="mt-[5px] h-2 rounded-full bg-[#e3e6e6]">
              <div
                className={"h-2 rounded-full " + (c.muted ? "bg-[#b2b4b5]" : "bg-[#4bdc9b]")}
                style={{ width: (c.value / 212) * 100 + "%" }}
              />
            </div>
          </li>
        ))}
      </ul>
      <div className="mt-[26px] flex h-9 items-center gap-[15px] pl-[17px] text-[24px] font-[450] tracking-[0.4px] text-[#096fe3]">
        <SearchIcon />
        Search in 1 elements
      </div>
    </div>
  );
}

export default function App() {
  return (
    <div className="flex h-[1410px] w-[2880px] flex-col overflow-hidden bg-[#f8faf9] font-['Inter',sans-serif]">
      <Header />
      <Toolbar />
      <main className="flex min-h-0 flex-1">
        <LeftPanel />
        <div className="flex flex-1 gap-4 overflow-hidden pt-4 pl-[14px]">
          <MapPanel />
          <div className="w-[566px] shrink-0">
            <PopulationCard />
            <UrbanityCard />
          </div>
        </div>
        <div className="w-[10px] shrink-0">
          <div className="h-[1197px] rounded-full bg-[#dde1e2]" />
        </div>
      </main>
    </div>
  );
}
